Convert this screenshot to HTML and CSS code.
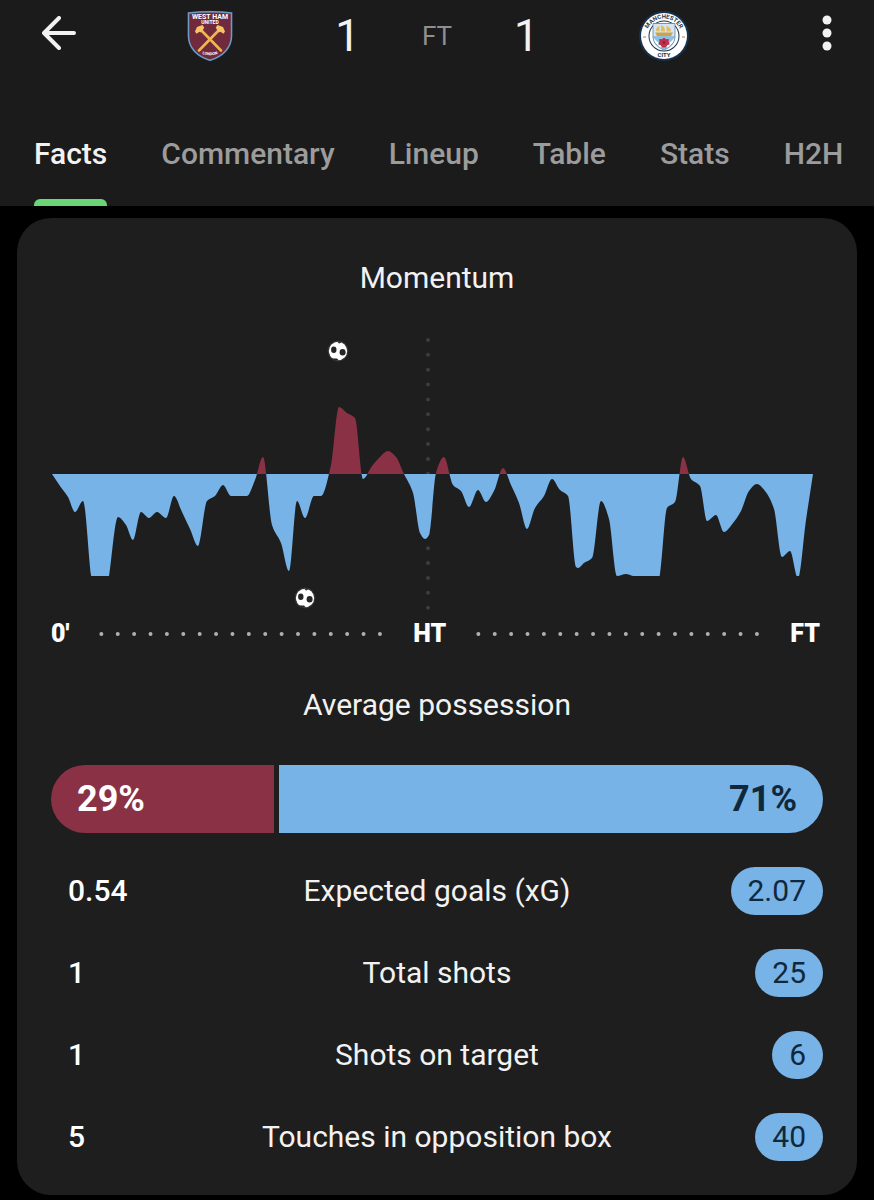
FILE: index.html
```html
<!DOCTYPE html>
<html lang="en">
<head>
<meta charset="UTF-8">
<meta name="viewport" content="width=device-width, initial-scale=1">
<title>West Ham United - Manchester City</title>
<link rel="stylesheet" href="styles.css">
</head>
<body>
  <header class="header">
    <div class="match-bar">
      <button class="icon-button" type="button" aria-label="Back">
        <svg width="34" height="34" viewBox="0 0 34 34">
          <path d="M17 2 2 17l15 15M2 17h30" fill="none" stroke="#f2f2f2" stroke-width="4" stroke-linecap="round" stroke-linejoin="round"/>
        </svg>
      </button>

      <div class="scoreline">
        <!-- West Ham -->
        <svg class="crest" width="50" height="52" viewBox="0 0 50 52" role="img" aria-label="West Ham United">
          <path d="M2.500 2Q25-.5 47.500 2V26C47.500 39 38 47.500 25 51.500 12 47.500 2.500 39 2.500 26Z" fill="#16344d"/>
          <path d="M3.500 3Q25 .5 46.500 3V26C46.500 38 37.500 46.500 25 50.300 12.500 46.500 3.500 38 3.500 26Z" fill="#712a3c" stroke="#6d9cc0" stroke-width="1.500"/>
          <path id="londonArc" d="M16 43.500Q25 47 34 43.500" fill="none"/>
          <text class="crest-name" x="25" y="8.500" fill="#fff" text-anchor="middle">WEST HAM</text>
          <text class="crest-sub" x="25" y="14" fill="#fff" text-anchor="middle">UNITED</text>
          <g stroke="#f0b64e" stroke-width="2.600" stroke-linecap="round">
            <path d="M15 19 36 40.500"/>
            <path d="M35 19 14 40.500"/>
          </g>
          <g fill="#f5c466">
            <path d="M10 21.500 12 17 17.500 15l1.800 2.800-3.300 4.700-1.500-.8-3 2z"/>
            <path d="M40 21.500 38 17 32.500 15l-1.800 2.800 3.300 4.700 1.500-.8 3 2z"/>
          </g>
          <text class="crest-tiny" fill="#fff"><textPath href="#londonArc" startOffset="50%" text-anchor="middle">LONDON</textPath></text>
        </svg>

        <div class="score">
          <span class="goals">1</span>
          <span class="status">FT</span>
          <span class="goals">1</span>
        </div>

        <!-- Man City -->
        <svg class="crest" width="50" height="50" viewBox="0 0 50 50" role="img" aria-label="Manchester City">
          <defs>
            <clipPath id="cityShield"><path d="M14 12.500h22V25c0 7.500-5 11.500-11 14-6-2.500-11-6.500-11-14z"/></clipPath>
          </defs>
          <circle cx="25" cy="25" r="25" fill="#17324d"/>
          <circle cx="25" cy="25" r="23" fill="#fff"/>
          <circle cx="25" cy="25" r="15.500" fill="#17324d"/>
          <circle cx="25" cy="25" r="14.500" fill="#fff"/>
          <g clip-path="url(#cityShield)">
            <path fill="#8fc0e6" d="M13 12h24v28H13z"/>
            <path fill="#d5e6f3" d="M13 12h24v13H13z"/>
            <path stroke="#fff" stroke-width="2" d="m13 27 9 9m-9-3 8 8M37 27l-9 9m9-3-8 8"/>
          </g>
          <path d="M14 12.500h22V25c0 7.500-5 11.500-11 14-6-2.500-11-6.500-11-14z" fill="none" stroke="#5f7f9b" stroke-width=".8"/>
          <path d="M16 21.500h18L32 25H18z" fill="#d0a244"/>
          <path d="M17 20c0-3 1-4 3.500-5v5.500zm5 .5V14c3 1 4 3 4 6.500zm5.500 0V15c3 .5 4.500 2.500 4.500 5.500z" fill="#e3bd63"/>
          <path d="m25 26.500 2 1.800 2.900-.3-.3 2.900 1.200 2.300-2.500 1L26.500 36.500h-3l-1.800-2.300-2.500-1 1.200-2.300-.3-2.900 2.900.3z" fill="#c22f48"/>
          <circle cx="25" cy="31.500" r="1.200" fill="#7c2140"/>
          <path id="manArc" d="M7.500 25A17.500 17.500 0 0 1 42.500 25" fill="none"/>
          <text class="city-name" fill="#17324d"><textPath href="#manArc" startOffset="50%" text-anchor="middle">MANCHESTER</textPath></text>
          <text class="city-name" fill="#17324d" x="25" y="46" text-anchor="middle">CITY</text>
          <path d="M4 26h3M43 26h3" stroke="#c8b27c" stroke-width="1.500"/>
        </svg>
      </div>

      <button class="icon-button icon-right" type="button" aria-label="More options">
        <svg width="10" height="36" viewBox="0 0 10 36" fill="#f2f2f2">
          <circle cx="5" cy="5" r="4.500"/>
          <circle cx="5" cy="18" r="4.500"/>
          <circle cx="5" cy="31" r="4.500"/>
        </svg>
      </button>
    </div>

    <nav class="tabs">
      <a class="tab active" href="#facts">Facts</a>
      <a class="tab" href="#commentary">Commentary</a>
      <a class="tab" href="#lineup">Lineup</a>
      <a class="tab" href="#table">Table</a>
      <a class="tab" href="#stats">Stats</a>
      <a class="tab" href="#h2h">H2H</a>
    </nav>
  </header>

  <main class="card" id="facts">
    <h2 class="title">Momentum</h2>

    <svg class="momentum" viewBox="51 330 772 290" role="img" aria-label="Momentum through the match">
      <defs>
        <clipPath id="homeHalf"><rect x="51" y="340" width="772" height="134"/></clipPath>
        <clipPath id="awayHalf"><rect x="51" y="474" width="772" height="102"/></clipPath>
        <g id="ball">
          <circle r="10.500" fill="#343434"/>
          <circle r="9.200" fill="#fff"/>
          <ellipse cx="-4.200" cy="-1.200" rx="2.700" ry="3.200" fill="#262626"/>
          <ellipse cx="4.600" cy="1.200" rx="3" ry="3.200" fill="#262626"/>
          <path d="M-1-9.500 4-8.500 1-7.500zM-6 7.500-1 7.500 1 9.500-3 9.500zM9-4 7-6.500 8-7zM-9.500 2-8 4-9 5z" fill="#262626"/>
        </g>
      </defs>
      <line class="half-line" x1="428" y1="340" x2="428" y2="609"/>
      <path class="home-area" clip-path="url(#homeHalf)"/>
      <path class="away-area" clip-path="url(#awayHalf)"/>
      <use href="#ball" x="338" y="351"/>
      <use href="#ball" x="305" y="598"/>
    </svg>

    <div class="timeline">
      <span>0'</span>
      <svg class="dots" viewBox="0 0 284 6"><line x1="2" y1="3" x2="283" y2="3"/></svg>
      <span>HT</span>
      <svg class="dots" viewBox="0 0 284 6"><line x1="2" y1="3" x2="283" y2="3"/></svg>
      <span>FT</span>
    </div>

    <h2 class="title">Average possession</h2>
    <div class="possession">
      <div class="share home" style="width: 29%">29%</div>
      <div class="share away" style="width: 71%">71%</div>
    </div>

    <table class="stats">
      <tr>
        <td class="home-value">0.54</td>
        <th scope="row">Expected goals (xG)</th>
        <td class="away-value"><span class="pill">2.07</span></td>
      </tr>
      <tr>
        <td class="home-value">1</td>
        <th scope="row">Total shots</th>
        <td class="away-value"><span class="pill">25</span></td>
      </tr>
      <tr>
        <td class="home-value">1</td>
        <th scope="row">Shots on target</th>
        <td class="away-value"><span class="pill">6</span></td>
      </tr>
      <tr>
        <td class="home-value">5</td>
        <th scope="row">Touches in opposition box</th>
        <td class="away-value"><span class="pill">40</span></td>
      </tr>
    </table>
  </main>

  <script src="script.js"></script>
</body>
</html>
```

FILE: styles.css
```css
* {
  box-sizing: border-box;
}

body {
  margin: 0;
  background-color: #000000;
  color: #f2f2f2;
  font-family: Roboto, "Liberation Sans", sans-serif;
  font-size: 30px;
}

.header {
  background-color: #1b1b1b;
}

.match-bar {
  display: grid;
  grid-template-columns: 60px 1fr 60px;
  height: 72px;
  padding: 0 42px;
}

.icon-button {
  display: flex;
  align-items: center;
  height: 66px;
  padding: 0;
  border: none;
  background: none;
  cursor: pointer;
}

.icon-right {
  justify-content: flex-end;
}

.scoreline {
  display: flex;
  align-items: center;
  justify-content: center;
  gap: 100px;
}

.crest {
  flex: none;
}

.crest-name {
  font: bold 7px Roboto, sans-serif;
}

.crest-sub {
  font: bold 5px Roboto, sans-serif;
}

.crest-tiny {
  font: bold 4px Roboto, sans-serif;
}

.city-name {
  font: bold 6px Roboto, sans-serif;
}

.score {
  display: flex;
  align-items: center;
  gap: 62px;
}

.goals {
  font-size: 44px;
  line-height: 72px;
}

.status {
  color: #8f8f8f;
  font-size: 26px;
}

.tabs {
  display: flex;
  gap: 54px;
  padding: 64px 28px 0 34px;
}

.tab {
  color: #9c9c9c;
  font-weight: 500;
  line-height: 36px;
  text-decoration: none;
}

.tab::after {
  content: "";
  display: block;
  height: 7px;
  margin-top: 27px;
  border-radius: 6px 6px 0 0;
}

.tab.active {
  color: #f2f2f2;
}

.tab.active::after {
  background-color: #6bd675;
}

.card {
  margin: 12px 17px 6px;
  padding: 42px 34px 0;
  border-radius: 34px;
  background-color: #1e1e1e;
}

.title {
  margin: 0;
  font-size: 30px;
  font-weight: 400;
  line-height: 36px;
  text-align: center;
}

.momentum {
  display: block;
  width: 100%;
  margin-top: 34px;
}

.half-line {
  stroke: #3d3d3d;
  stroke-width: 4;
  stroke-linecap: round;
  stroke-dasharray: 0 14.87;
}

.home-area {
  fill: #8a3146;
}

.away-area {
  fill: #77b3e6;
}

.timeline {
  display: flex;
  align-items: center;
  padding-right: 3px;
  color: #ffffff;
  font-size: 25px;
  font-weight: 900;
  line-height: 28px;
}

.dots {
  flex: 1;
  min-width: 0;
  margin: 0 30px;
}

.dots line {
  stroke: #b0b0b0;
  stroke-width: 4;
  stroke-linecap: round;
  stroke-dasharray: 0 16.43;
}

.timeline + .title {
  margin-top: 39px;
}

.possession {
  display: flex;
  gap: 5px;
  margin-top: 42px;
  border-radius: 34px;
  overflow: hidden;
}

.share {
  padding: 0 26px;
  font-size: 36px;
  font-weight: 700;
  line-height: 68px;
}

.home {
  background-color: #8a3146;
  color: #ffffff;
}

.away {
  background-color: #77b3e6;
  color: #10283c;
  text-align: right;
}

.stats {
  width: 100%;
  border-spacing: 0 34px;
  table-layout: fixed;
  line-height: 48px;
}

.stats td,
.stats th {
  padding: 0;
  font-weight: 400;
  vertical-align: top;
}

.stats th {
  width: 60%;
}

.stats .home-value {
  padding-left: 17px;
  color: #ffffff;
  font-weight: 500;
}

.stats .away-value {
  text-align: right;
}

.pill {
  display: inline-block;
  padding: 0 17px;
  border-radius: 24px;
  background-color: #77b3e6;
  color: #10283c;
  vertical-align: top;
}
```

FILE: script.js
```js
var BASE = 474;

// x is the time, y the pressure: above the base line for home, below it for away
var points = [
  [52, 474], [60, 486], [68, 497], [75, 512], [83, 501], [91, 575], [100, 640], [109, 576],
  [118, 517], [126, 525], [133, 540], [141, 512], [149, 518], [157, 512], [166, 518],
  [174, 496], [182, 512], [190, 529], [198, 546], [207, 501], [215, 496], [223, 485],
  [231, 496], [247, 496], [255, 480], [263, 457], [272, 525], [281, 543], [289, 571],
  [297, 501], [305, 518], [314, 496], [321, 496], [331, 465], [339, 407], [347, 413],
  [355, 418], [363, 479], [372, 466], [380, 457], [388, 451], [396, 457], [404, 474],
  [413, 493], [420, 533], [425, 539], [429, 535], [436, 473], [444, 457], [453, 485],
  [461, 491], [469, 507], [478, 490], [486, 502], [494, 491], [503, 468], [511, 485],
  [519, 503], [527, 529], [535, 508], [544, 496], [552, 479], [560, 490], [568, 496],
  [576, 567], [578, 568], [584, 563], [592, 558], [601, 501], [609, 519], [617, 576],
  [626, 574], [633, 576], [651, 582], [659, 578], [667, 508], [675, 502], [683, 457],
  [691, 479], [700, 486], [707, 521], [716, 515], [724, 532], [733, 523], [741, 511],
  [749, 491], [757, 484], [765, 491], [774, 509], [782, 557], [790, 551], [798, 578],
  [806, 520], [813, 474]
];

function slope(a, b) {
  return (b[1] - a[1]) / (b[0] - a[0]);
}

// slope of the curve at point i, flat at every peak and valley
function tangent(i) {
  if (i === 0) return slope(points[0], points[1]);
  if (i === points.length - 1) return slope(points[i - 1], points[i]);
  var before = slope(points[i - 1], points[i]);
  var after = slope(points[i], points[i + 1]);
  if (before * after <= 0) return 0;
  return 2 * before * after / (before + after);
}

function areaPath() {
  var d = "M" + points[0][0] + " " + BASE;
  for (var i = 1; i < points.length; i++) {
    var a = points[i - 1];
    var b = points[i];
    var third = (b[0] - a[0]) / 3;
    d += "C" + [
      a[0] + third, a[1] + third * tangent(i - 1),
      b[0] - third, b[1] - third * tangent(i),
      b[0], b[1]
    ].join(" ");
  }
  return d + "Z";
}

document.querySelector(".home-area").setAttribute("d", areaPath());
document.querySelector(".away-area").setAttribute("d", areaPath());
```
